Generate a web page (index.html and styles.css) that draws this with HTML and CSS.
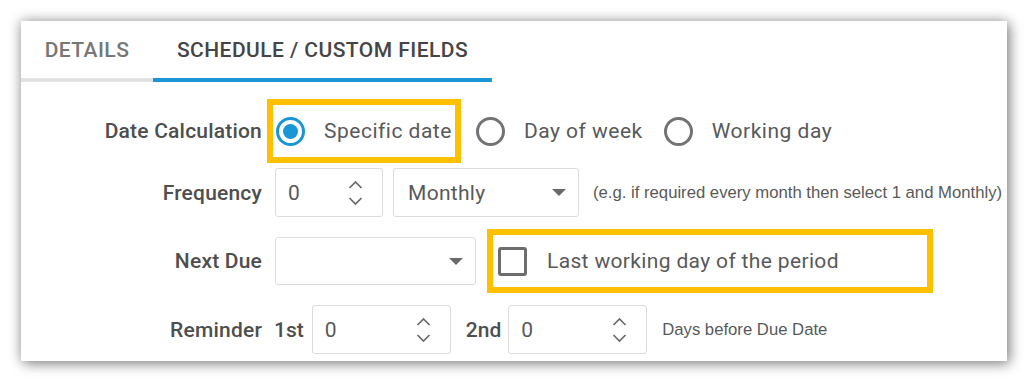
FILE: index.html
```html
<!DOCTYPE html>
<html lang="en">
<head>
    <meta charset="UTF-8">
    <title>Schedule / Custom Fields</title>
    <link rel="stylesheet" href="styles.css">
</head>
<body>

    <div class="panel">
        <div class="tabs">
            <div class="tab">DETAILS</div>
            <div class="tab active">SCHEDULE / CUSTOM FIELDS</div>
        </div>

        <div class="form">
            <div class="row row-calc">
                <div class="label">Date Calculation</div>
                <div class="radios">
                    <label class="radio-opt marked"><span class="radio checked"></span>Specific date</label>
                    <label class="radio-opt"><span class="radio"></span>Day of week</label>
                    <label class="radio-opt"><span class="radio"></span>Working day</label>
                </div>
            </div>

            <div class="row row-freq">
                <div class="label">Frequency</div>
                <div class="spin freq-spin">
                    <span class="value">0</span>
                    <svg class="chevrons" width="15" height="26" viewBox="0 0 15 26"><polyline points="1.5,8 7.5,2 13.5,8"/><polyline points="1.5,18 7.5,24 13.5,18"/></svg>
                </div>
                <div class="select freq-select">
                    <span class="value">Monthly</span>
                    <span class="caret"></span>
                </div>
                <span class="hint freq-hint">(e.g. if required every month then select 1 and Monthly)</span>
            </div>

            <div class="row row-due">
                <div class="label">Next Due</div>
                <div class="select due-select">
                    <span class="value"></span>
                    <span class="caret"></span>
                </div>
                <label class="check-opt marked"><span class="checkbox"></span>Last working day of the period</label>
            </div>

            <div class="row row-remind">
                <div class="label">Reminder</div>
                <span class="sub-label">1st</span>
                <div class="spin remind-spin">
                    <span class="value">0</span>
                    <svg class="chevrons" width="15" height="26" viewBox="0 0 15 26"><polyline points="1.5,8 7.5,2 13.5,8"/><polyline points="1.5,18 7.5,24 13.5,18"/></svg>
                </div>
                <span class="sub-label second">2nd</span>
                <div class="spin remind-spin">
                    <span class="value">0</span>
                    <svg class="chevrons" width="15" height="26" viewBox="0 0 15 26"><polyline points="1.5,8 7.5,2 13.5,8"/><polyline points="1.5,18 7.5,24 13.5,18"/></svg>
                </div>
                <span class="hint remind-hint">Days before Due Date</span>
            </div>
        </div>
    </div>

</body>
</html>
```

FILE: styles.css
```css
:root {
    --blue: #1a96d6;
    --marker: #ffc000;
    --label-color: #4e4e4e;
    --text-color: #595959;
    --field-border: #dcdcdc;
    --icon-color: #6a6a6a;
}
body {
    margin: 0;
    padding: 21px;
    background: #fff;
    font-family: 'Roboto', 'Liberation Sans', sans-serif;
    color: var(--text-color);
}
.panel {
    width: 986px;
    height: 340px;
    background: #fff;
    box-shadow: 3px 3px 12px rgba(0, 0, 0, 0.4), -1px -1px 12px rgba(0, 0, 0, 0.22);
    overflow: hidden;
}

/* tabs */
.tabs {
    display: flex;
}
.tab {
    height: 57px;
    line-height: 58px;
    text-align: center;
    font-size: 21px;
    font-weight: 500;
    letter-spacing: 0.45px;
    color: #777;
    border-bottom: 4px solid #e1e1e1;
    width: 132px;
}
.tab.active {
    width: 339px;
    color: #454545;
    border-bottom-color: var(--blue);
}

/* form rows */
.form {
    padding-top: 23px;
}
.row {
    display: flex;
    align-items: center;
}
.label {
    width: 241px;
    margin-right: 13px;
    text-align: right;
    font-size: 21px;
    font-weight: 500;
    letter-spacing: 0.2px;
    color: var(--label-color);
}
.row-calc {
    height: 52px;
}
.row-freq {
    height: 49px;
    margin-top: 11px;
}
.row-due {
    height: 48px;
    margin-top: 20px;
}
.row-remind {
    height: 49px;
    margin-top: 20px;
}

/* radio buttons */
.radios {
    display: flex;
    align-items: center;
    gap: 21px;
    margin-left: -2px;
}
.radio-opt {
    display: flex;
    align-items: center;
    gap: 19px;
    font-size: 21px;
    letter-spacing: 0.5px;
    color: var(--text-color);
}
.radio-opt.marked {
    height: 52px;
    padding: 0 3px 0 3px;
}
.marked {
    outline: 6px solid var(--marker);
}
.radio {
    width: 29px;
    height: 29px;
    box-sizing: border-box;
    border: 3px solid #737373;
    border-radius: 50%;
    display: flex;
    align-items: center;
    justify-content: center;
}
.radio.checked {
    border-color: var(--blue);
}
.radio.checked::after {
    content: '';
    width: 15px;
    height: 15px;
    border-radius: 50%;
    background: var(--blue);
}

/* fields */
.spin, .select {
    height: 49px;
    box-sizing: border-box;
    border: 1px solid var(--field-border);
    border-radius: 3px;
    display: flex;
    align-items: center;
    justify-content: space-between;
    font-size: 21px;
    color: var(--text-color);
}
.spin {
    padding: 0 19px 0 12px;
}
.chevrons polyline {
    fill: none;
    stroke: var(--icon-color);
    stroke-width: 1.7;
}
.freq-spin {
    width: 108px;
}
.remind-spin {
    width: 139px;
}
.select {
    padding: 0 12px 0 14px;
    letter-spacing: 0.3px;
}
.caret {
    width: 0;
    height: 0;
    border-left: 7px solid transparent;
    border-right: 7px solid transparent;
    border-top: 7px solid var(--icon-color);
}
.freq-select {
    width: 186px;
    margin-left: 10px;
}
.due-select {
    width: 201px;
    height: 48px;
}
.hint {
    font-family: 'Liberation Sans', Arial, sans-serif;
    font-size: 16.7px;
    color: var(--text-color);
    white-space: nowrap;
}
.freq-hint {
    margin-left: 14px;
}
.remind-hint {
    margin-left: 15px;
}

/* checkbox */
.check-opt {
    display: flex;
    align-items: center;
    gap: 20px;
    width: 434px;
    height: 52px;
    margin-left: 17px;
    padding-left: 5px;
    box-sizing: border-box;
    font-size: 21px;
    letter-spacing: 0.35px;
    color: var(--text-color);
}
.checkbox {
    width: 29px;
    height: 29px;
    box-sizing: border-box;
    border: 3px solid #6d6d6d;
    border-radius: 3px;
}

/* reminder */
.sub-label {
    font-size: 21px;
    font-weight: 500;
    color: var(--label-color);
    margin: 0 8px 0 -1px;
}
.sub-label.second {
    margin: 0 7px 0 15px;
}
```
